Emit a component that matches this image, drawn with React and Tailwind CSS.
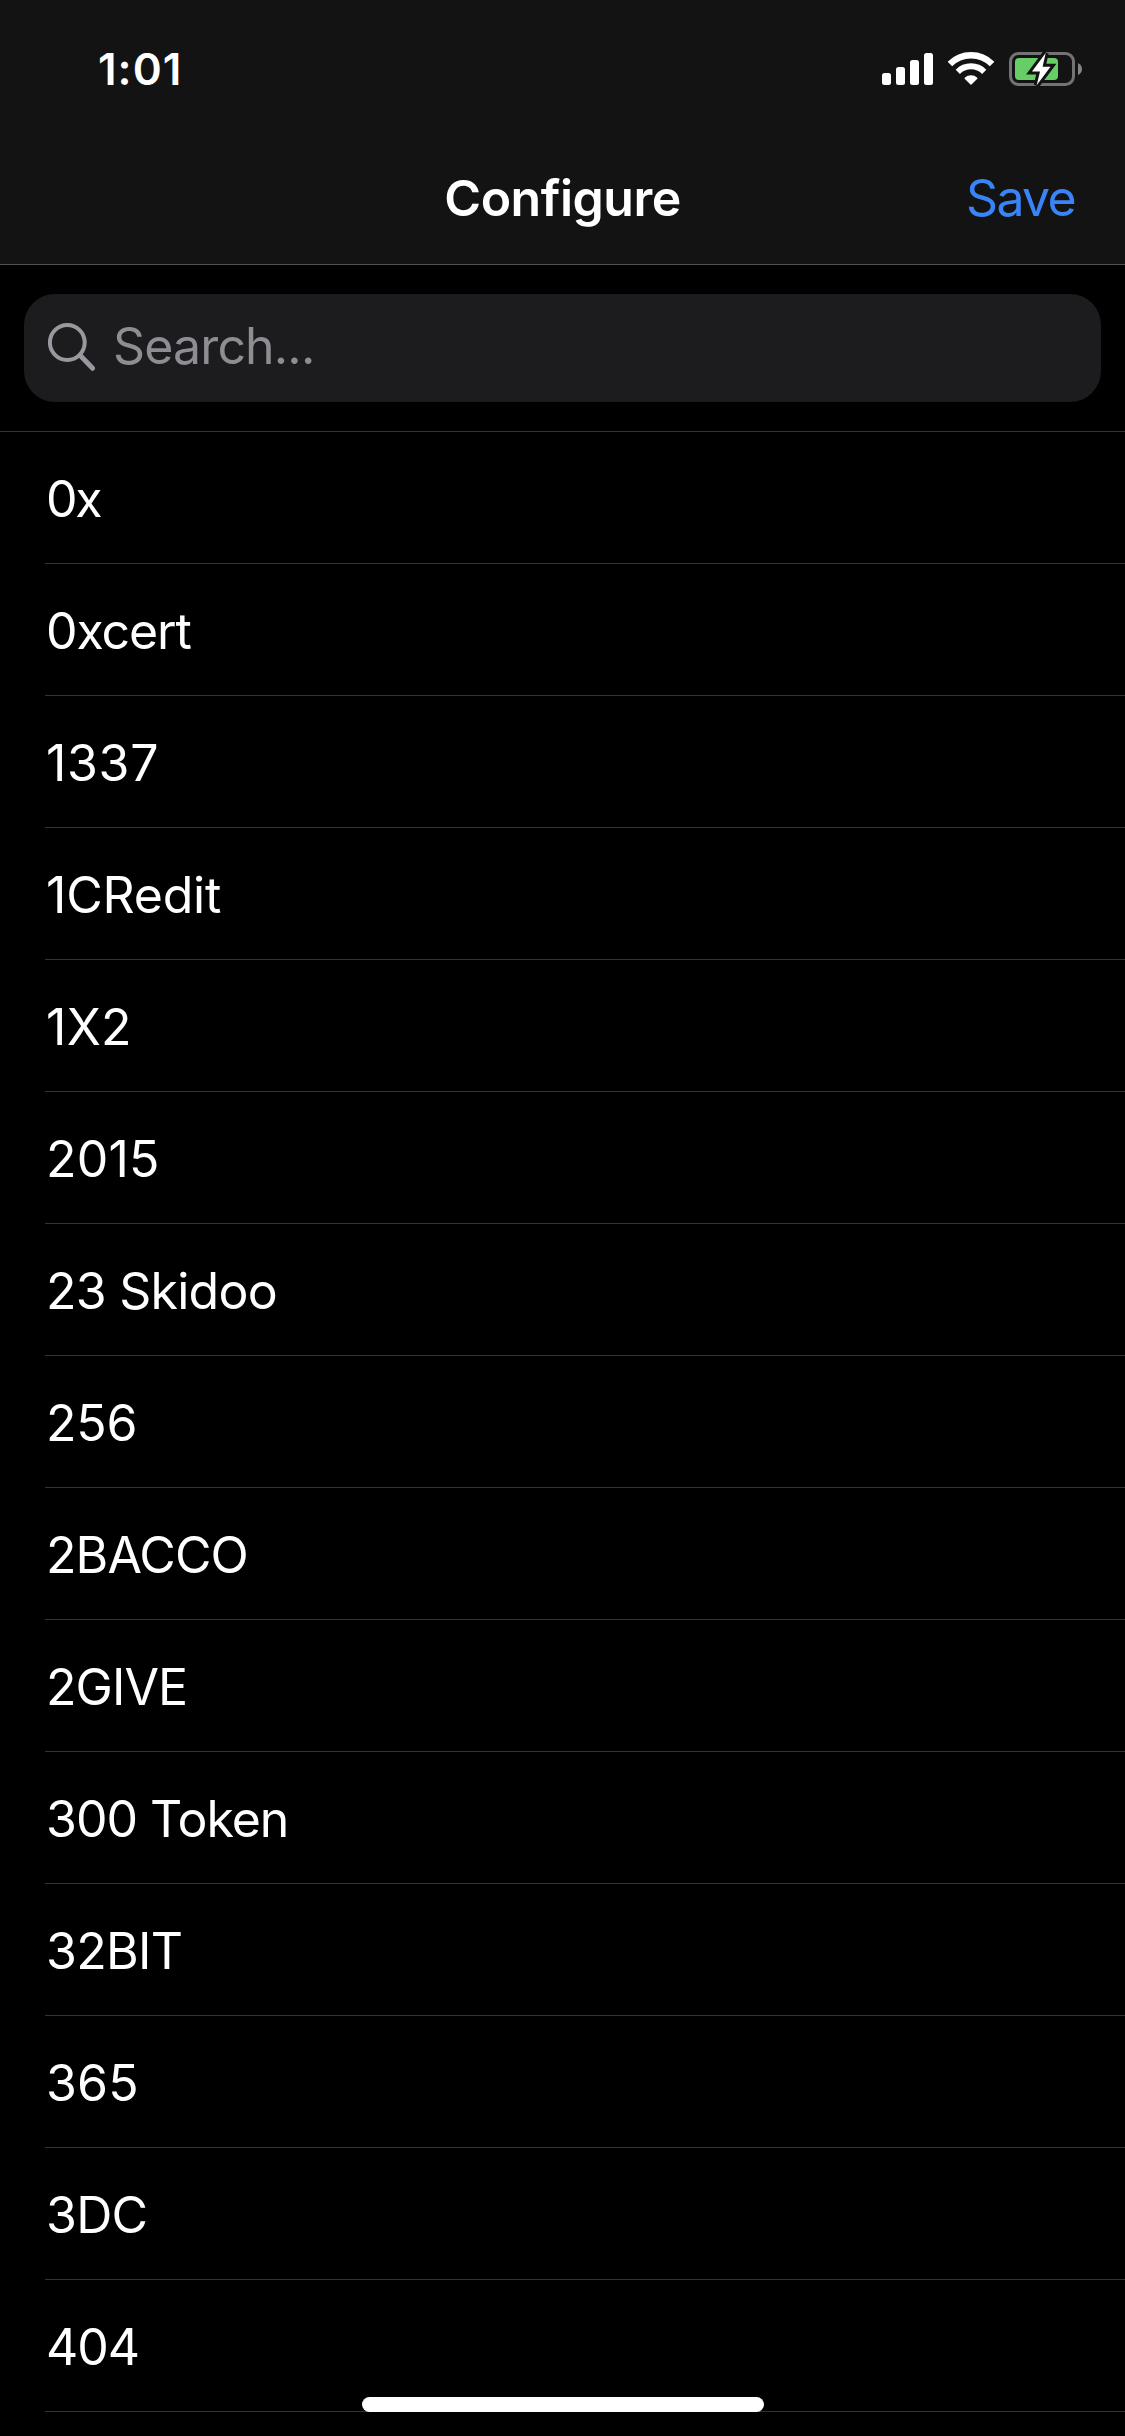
import React from "react";

const coins = [
  { name: "0x", tracking: "tracking-[-2.4px]" },
  { name: "0xcert", tracking: "tracking-[-1.1px]" },
  { name: "1337", tracking: "tracking-[0.7px]" },
  { name: "1CRedit", tracking: "tracking-[-0.2px]" },
  { name: "1X2", tracking: "tracking-[0.3px]" },
  { name: "2015", tracking: "tracking-[0.2px]" },
  { name: "23 Skidoo", tracking: "tracking-[-0.75px]" },
  { name: "256", tracking: "tracking-[-0.2px]" },
  { name: "2BACCO", tracking: "tracking-[-0.9px]" },
  { name: "2GIVE", tracking: "tracking-[-0.9px]" },
  { name: "300 Token", tracking: "tracking-[-1px]" },
  { name: "32BIT", tracking: "tracking-[-0.7px]" },
  { name: "365", tracking: "tracking-[0.2px]" },
  { name: "3DC", tracking: "tracking-[-0.7px]" },
  { name: "404", tracking: "tracking-[-1px]" },
];

const BOLT = "1045.7,53 1032,71.5 1040,71.5 1036.7,85.3 1050.5,66.7 1042.6,66.7";

function StatusIcons() {
  return (
    <svg width="214" height="42" viewBox="876 48 214 42" aria-hidden="true">
      <g fill="#fff">
        <rect x="882" y="73" width="9" height="12" rx="2.5" />
        <rect x="896" y="67" width="9" height="18" rx="2.5" />
        <rect x="910" y="60" width="9" height="25" rx="2.5" />
        <rect x="924" y="53" width="9" height="32" rx="2.5" />
      </g>
      <g fill="none" stroke="#fff">
        <path d="M949.93 63.93A29.8 29.8 0 0 1 992.07 63.93" strokeWidth="6.4" />
        <path d="M957.8 71.8A18.7 18.7 0 0 1 984.2 71.8" strokeWidth="6" />
      </g>
      <path
        d="M965.2 78.2A8.6 8.6 0 0 1 976.8 78.2L971 84Z"
        fill="#fff"
        stroke="#fff"
        strokeWidth="1.4"
        strokeLinejoin="round"
      />
      <rect x="1010.5" y="53.5" width="63" height="31" rx="8" fill="none" stroke="#737373" strokeWidth="3" />
      <path d="M1078 63Q1082 65 1082 69Q1082 73 1078 75Z" fill="#858585" />
      <rect x="1015" y="58" width="43" height="22" rx="4" fill="#67ce67" />
      <polygon points={BOLT} fill="#131313" stroke="#131313" strokeWidth="6" strokeMiterlimit="3" />
      <polygon points={BOLT} fill="#fff" />
    </svg>
  );
}

function SearchIcon() {
  return (
    <svg
      className="mt-1 shrink-0"
      width="50"
      height="50"
      viewBox="0 0 50 50"
      fill="none"
      stroke="#98989f"
      aria-hidden="true"
    >
      <circle cx="19.3" cy="19.5" r="17.4" strokeWidth="4" />
      <path d="M32 32.2L44.6 45.3" strokeWidth="5" strokeLinecap="round" />
    </svg>
  );
}

export default function App() {
  return (
    <div className="relative flex h-[2436px] w-[1125px] flex-col overflow-hidden bg-black font-['Inter',sans-serif] text-[50px] leading-[60px] text-white">
      <header className="h-[265px] shrink-0 border-b border-[#515151] bg-[#131313]">
        <div className="flex h-[132px] items-center justify-between pt-[6px] pr-[35px] pl-[98px]">
          <span className="text-[44px] font-semibold tracking-[1px]">1:01</span>
          <StatusIcons />
        </div>
        <div className="grid h-[132px] grid-cols-[1fr_auto_1fr] items-center pr-[50px] pl-[50px]">
          <span />
          <h1 className="font-semibold tracking-[-0.5px]">Configure</h1>
          <button className="justify-self-end tracking-[-1.7px] text-[#3984f8]">Save</button>
        </div>
      </header>

      <div className="h-[167px] shrink-0 border-b border-[#333335] px-6 pt-[29px]">
        <div className="flex h-[108px] items-center rounded-[31px] bg-[#1c1c1e] pb-1 pl-6">
          <SearchIcon />
          <span className="ml-[15px] tracking-[-0.85px] text-[#8d8d93]">Search...</span>
        </div>
      </div>

      <ul className="pl-[45px]">
        {coins.map((coin) => (
          <li
            key={coin.name}
            className="flex h-[132px] items-center border-b border-[#333335] pt-[3px] pl-px"
          >
            <span className={coin.tracking}>{coin.name}</span>
          </li>
        ))}
      </ul>

      <div className="absolute bottom-6 left-[362px] h-[15px] w-[402px] rounded-full bg-white" />
    </div>
  );
}
